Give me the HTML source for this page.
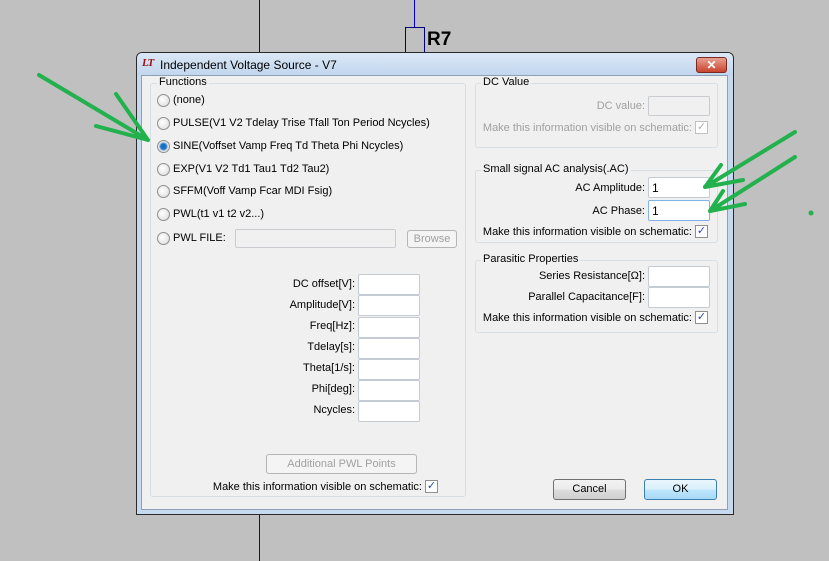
<!DOCTYPE html>
<html><head><meta charset="utf-8"><style>
*{margin:0;padding:0;box-sizing:border-box}
body{width:829px;height:561px;background:#c0c0c0;position:relative;overflow:hidden;font-family:"Liberation Sans",sans-serif;font-size:11px;color:#000}
.a{position:absolute}
.win{left:136px;top:52px;width:598px;height:463px;border:1px solid #2a2a2a;border-radius:6px 6px 0 0;background:#c6d9ef}
.title{left:137px;top:53px;width:596px;height:22px;background:linear-gradient(#dbe8f6,#c2d6ee);border-radius:5px 5px 0 0}
.body{left:141px;top:75px;width:587px;height:435px;background:#f0f0f0;border:1px solid #8ca0b8}
.grp{border:1px solid #d5dfe5;border-radius:3px}
.gl{background:#f0f0f0;padding:0 2px;white-space:nowrap}
.rad{width:13px;height:13px;border-radius:50%;border:1px solid #8e8f8f;background:radial-gradient(circle at 40% 40%,#fff,#d8d8d8)}
.t{white-space:nowrap}
.r{white-space:nowrap;text-align:right}
.in{background:#fff;border:1px solid #c4cbd2;border-radius:2px}
.dis{background:#f0f0f0;border:1px solid #c9cdd1;border-radius:2px}
.cb{width:13px;height:13px;border:1px solid #8f8f8f;background:#fff;font-size:11px;line-height:11px;text-align:center;color:#2c4a9a}
.btn{border:1px solid #707070;border-radius:3px;background:linear-gradient(#f2f2f2,#ebebeb 50%,#dddddd 51%,#cfcfcf);text-align:center;line-height:18px}
.gray{color:#a0a0a0}
</style></head><body>
<div class="a" style="left:259px;top:0;width:1px;height:52px;background:#0000e0"></div>
<div class="a" style="left:259px;top:515px;width:1px;height:46px;background:#0000e0"></div>
<div class="a" style="left:414px;top:0;width:1px;height:28px;background:#0000e0"></div>
<div class="a" style="left:405px;top:27px;width:20px;height:26px;border:1px solid #000080;border-bottom:none"></div>
<div class="a" style="left:427px;top:29px;font-size:19px;font-weight:bold">R7</div>

<div class="a win"></div>
<div class="a title"></div>
<div class="a" style="left:142px;top:57px;font-size:11px;font-weight:bold;font-style:italic;color:#a01010;font-family:'Liberation Serif',serif;letter-spacing:-1px">LT</div>
<div class="a t" style="left:160px;top:58px;font-size:12px">Independent Voltage Source - V7</div>
<div class="a" style="left:696px;top:57px;width:31px;height:16px;border:1px solid #7a2a20;border-radius:3px;background:linear-gradient(#e8a090,#c8442e);color:#fff;font-weight:bold;text-align:center;line-height:14px;font-size:12px">✕</div>
<div class="a body"></div>

<div class="a grp" style="left:150px;top:83px;width:316px;height:414px"></div>
<div class="a gl" style="left:157px;top:76px">Functions</div>
<div class="a rad" style="left:157px;top:94px"></div><div class="a t" style="left:173px;top:94px">(none)</div>
<div class="a rad" style="left:157px;top:117px"></div><div class="a t" style="left:173px;top:117px">PULSE(V1 V2 Tdelay Trise Tfall Ton Period Ncycles)</div>
<div class="a rad" style="left:157px;top:140px;background:radial-gradient(circle,#1a70c0 0 2.5px,#5aa0e0 3.5px,#e0e0e0 4.5px,#fff)"></div><div class="a t" style="left:173px;top:140px">SINE(Voffset Vamp Freq Td Theta Phi Ncycles)</div>
<div class="a rad" style="left:157px;top:163px"></div><div class="a t" style="left:173px;top:163px">EXP(V1 V2 Td1 Tau1 Td2 Tau2)</div>
<div class="a rad" style="left:157px;top:185px"></div><div class="a t" style="left:173px;top:185px">SFFM(Voff Vamp Fcar MDI Fsig)</div>
<div class="a rad" style="left:157px;top:208px"></div><div class="a t" style="left:173px;top:208px">PWL(t1 v1 t2 v2...)</div>
<div class="a rad" style="left:157px;top:232px"></div><div class="a t" style="left:173px;top:232px">PWL FILE:</div>
<div class="a dis" style="left:235px;top:229px;width:161px;height:19px"></div>
<div class="a btn gray" style="left:407px;top:230px;width:50px;height:18px;border-color:#b5b5b5;background:#f4f4f4;line-height:16px">Browse</div>

<div class="a r" style="left:240px;top:278px;width:115px">DC offset[V]:</div><div class="a in" style="left:358px;top:274px;width:62px;height:21px"></div>
<div class="a r" style="left:240px;top:299px;width:115px">Amplitude[V]:</div><div class="a in" style="left:358px;top:295px;width:62px;height:21px"></div>
<div class="a r" style="left:240px;top:320px;width:115px">Freq[Hz]:</div><div class="a in" style="left:358px;top:317px;width:62px;height:21px"></div>
<div class="a r" style="left:240px;top:341px;width:115px">Tdelay[s]:</div><div class="a in" style="left:358px;top:338px;width:62px;height:21px"></div>
<div class="a r" style="left:240px;top:362px;width:115px">Theta[1/s]:</div><div class="a in" style="left:358px;top:359px;width:62px;height:21px"></div>
<div class="a r" style="left:240px;top:383px;width:115px">Phi[deg]:</div><div class="a in" style="left:358px;top:380px;width:62px;height:21px"></div>
<div class="a r" style="left:240px;top:404px;width:115px">Ncycles:</div><div class="a in" style="left:358px;top:401px;width:62px;height:21px"></div>

<div class="a btn gray" style="left:266px;top:454px;width:151px;height:20px;border-color:#b5b5b5;background:#f4f4f4">Additional PWL Points</div>
<div class="a r" style="left:180px;top:481px;width:242px">Make this information visible on schematic:</div>
<div class="a cb" style="left:425px;top:480px">✓</div>

<div class="a grp" style="left:475px;top:83px;width:243px;height:65px"></div>
<div class="a gl" style="left:481px;top:76px">DC Value</div>
<div class="a r gray" style="left:530px;top:100px;width:115px">DC value:</div>
<div class="a dis" style="left:648px;top:96px;width:62px;height:20px"></div>
<div class="a r gray" style="left:450px;top:122px;width:242px">Make this information visible on schematic:</div>
<div class="a cb" style="left:695px;top:121px;color:#b0b0b0;border-color:#c0c0c0">✓</div>

<div class="a grp" style="left:475px;top:170px;width:243px;height:73px"></div>
<div class="a gl" style="left:481px;top:163px">Small signal AC analysis(.AC)</div>
<div class="a r" style="left:530px;top:182px;width:115px">AC Amplitude:</div>
<div class="a in" style="left:648px;top:177px;width:62px;height:21px;padding:3px 3px;font-size:12px">1</div>
<div class="a r" style="left:530px;top:205px;width:115px">AC Phase:</div>
<div class="a in" style="left:648px;top:200px;width:62px;height:21px;padding:3px 3px;font-size:12px;border-color:#7eb4ea">1</div>
<div class="a r" style="left:450px;top:226px;width:242px">Make this information visible on schematic:</div>
<div class="a cb" style="left:695px;top:225px">✓</div>

<div class="a grp" style="left:475px;top:260px;width:243px;height:73px"></div>
<div class="a gl" style="left:481px;top:253px">Parasitic Properties</div>
<div class="a r" style="left:500px;top:270px;width:145px">Series Resistance[Ω]:</div>
<div class="a in" style="left:648px;top:266px;width:62px;height:21px"></div>
<div class="a r" style="left:500px;top:291px;width:145px">Parallel Capacitance[F]:</div>
<div class="a in" style="left:648px;top:287px;width:62px;height:21px"></div>
<div class="a r" style="left:450px;top:312px;width:242px">Make this information visible on schematic:</div>
<div class="a cb" style="left:695px;top:311px">✓</div>

<div class="a btn" style="left:553px;top:479px;width:73px;height:21px">Cancel</div>
<div class="a btn" style="left:644px;top:479px;width:73px;height:21px;border-color:#3c7fb1;background:linear-gradient(#eaf6fd,#d9f0fc 50%,#bee6fd 51%,#a7d9f5)">OK</div>

<svg class="a" style="left:0;top:0" width="829" height="561">
<g stroke="#22b14c" stroke-width="4" stroke-linecap="round" fill="none">
<path d="M39 75 L148 140 M116 94 L148 140 M96 126 L148 140"/>
<path d="M795 132 L705 187 M705 187 L721 165 M705 187 L743 180"/>
<path d="M795 157 L710 211 M710 211 L723 191 M710 211 L745 204"/>
</g>
<circle cx="811" cy="213" r="2.5" fill="#22b14c"/>
</svg>
</body></html>
